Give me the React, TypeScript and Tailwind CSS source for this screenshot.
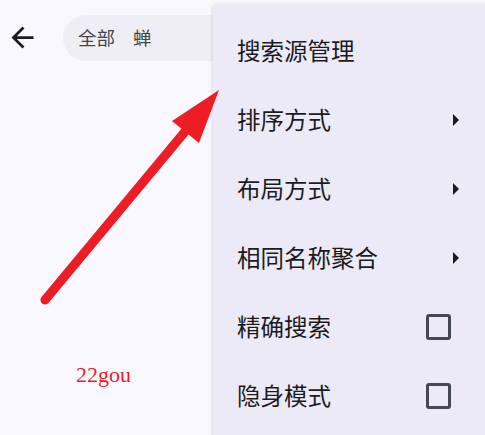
import React from 'react'

const menuItems: { label: string; kind: 'none' | 'sub' | 'check' }[] = [
  { label: '搜索源管理', kind: 'none' },
  { label: '排序方式', kind: 'sub' },
  { label: '布局方式', kind: 'sub' },
  { label: '相同名称聚合', kind: 'sub' },
  { label: '精确搜索', kind: 'check' },
  { label: '隐身模式', kind: 'check' },
]

const cjk = { fontFamily: '"Noto Sans CJK SC", "Noto Sans", sans-serif' }

export default function App() {
  return (
    <main className="relative h-[435px] w-[485px] overflow-hidden bg-[#f9f8fe]" style={cjk}>
      <header className="flex h-[76px] items-start pt-[15px]">
        <button className="ml-[6px] mt-[6px] flex h-[33px] w-[33px] items-center justify-center text-[#1c1b1f]">
          <svg viewBox="0 0 24 24" className="h-[33px] w-[33px]" fill="currentColor">
            <path d="M20 11H7.83l5.59-5.59L12 4l-8 8 8 8 1.41-1.41L7.83 13H20v-2z" />
          </svg>
        </button>
        <div className="ml-[24px] flex h-[46px] flex-1 items-center rounded-l-full bg-[#efeef4] pl-[15px] text-[18.5px] text-[#46454c]">
          <span>全部</span>
          <span className="ml-[18px]">蝉</span>
        </div>
      </header>

      <p
        className="absolute left-[76px] top-[364px] text-[22px] leading-none text-[#ee1c25]"
        style={{ fontFamily: '"Liberation Serif", serif' }}
      >
        22gou
      </p>

      <div className="absolute left-[213px] top-[4px] h-[460px] w-[290px] rounded-[4px] bg-[#eceaf6] pt-[12px] shadow-[0_1px_4px_rgba(0,0,0,0.18)]">
        {menuItems.map((item) => (
          <div key={item.label} className="flex h-[69px] items-center pl-[24px] pr-[50px] text-[23.5px] text-[#1c1b1f]">
            <span className="flex-1">{item.label}</span>
            {item.kind === 'sub' && (
              <span className="mr-[-6px] h-0 w-0 border-y-[6.5px] border-l-[6px] border-y-transparent border-l-[#1c1b1f]" />
            )}
            {item.kind === 'check' && (
              <span className="mr-[2px] h-[26px] w-[25px] rounded-[3px] border-[3px] border-[#454752]" />
            )}
          </div>
        ))}
      </div>

      <svg className="pointer-events-none absolute inset-0" width="485" height="435">
        <line x1="45" y1="300" x2="188" y2="128" stroke="#ee1c25" strokeWidth="9" strokeLinecap="round" />
        <polygon points="219,90 172,121 199,143" fill="#ee1c25" />
      </svg>
    </main>
  )
}
